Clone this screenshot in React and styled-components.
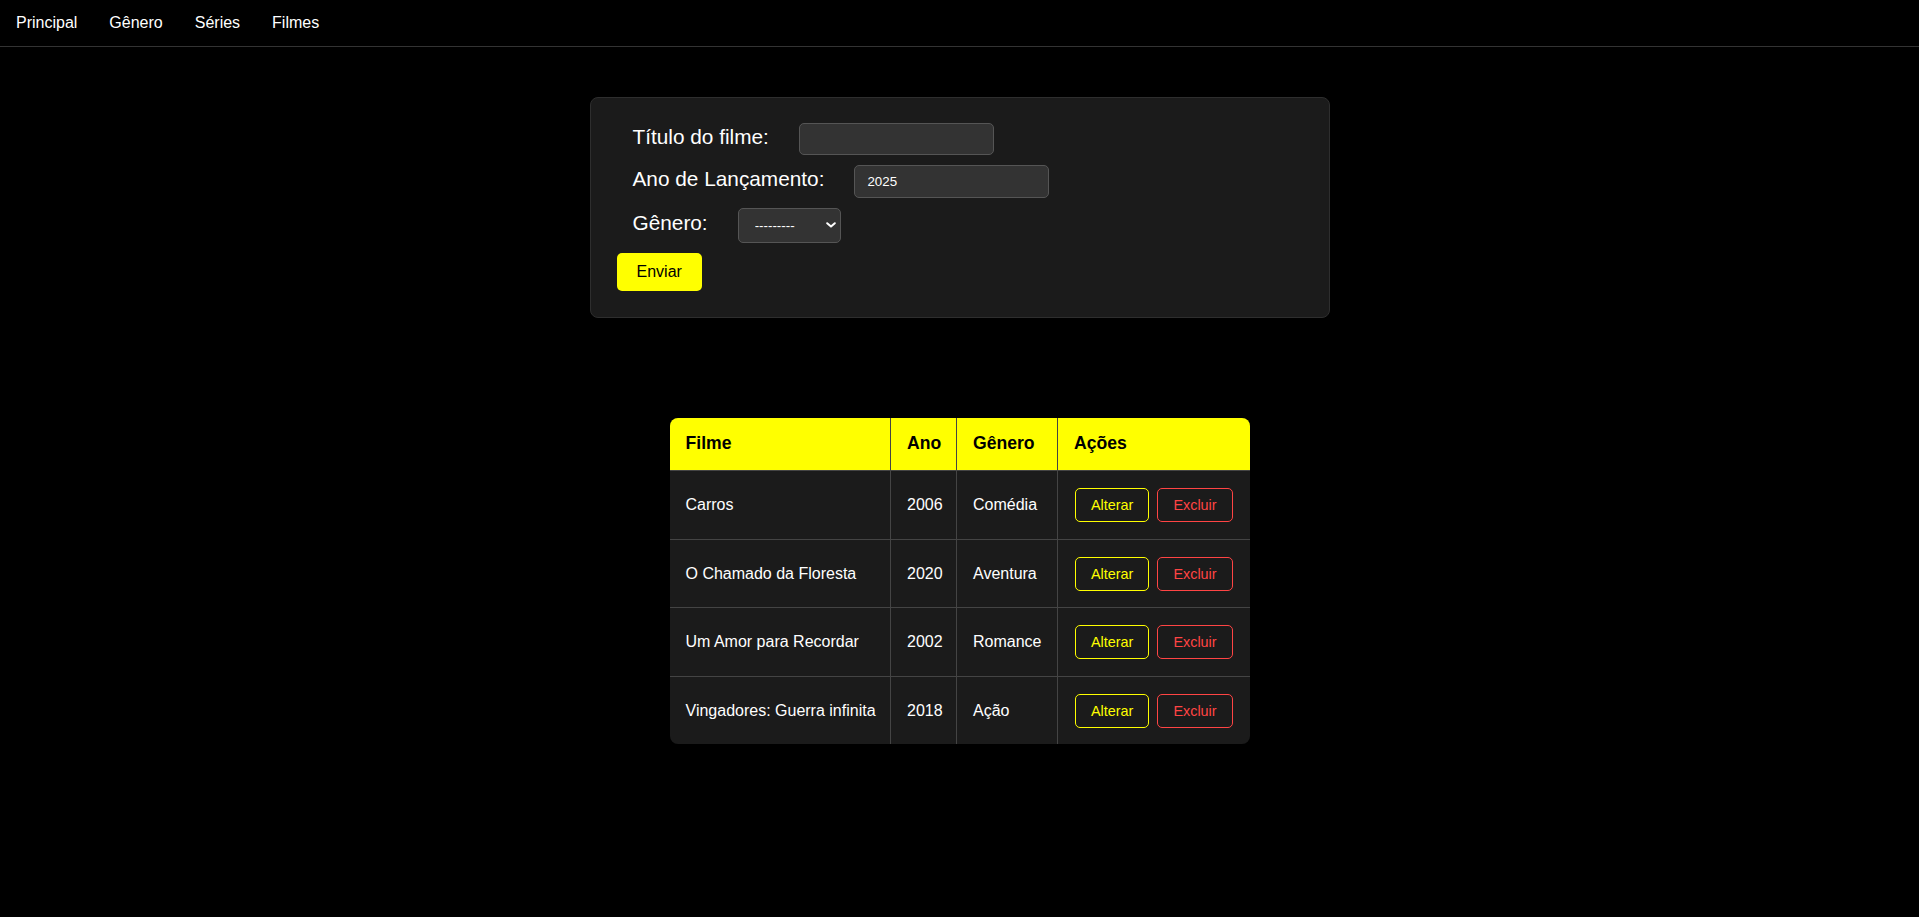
import styled, { createGlobalStyle } from "styled-components";

const GlobalStyle = createGlobalStyle`
  * {
    box-sizing: border-box;
  }
  body {
    margin: 0;
    background-color: #000;
    color: #fff;
    font-family: "Liberation Sans", Arial, sans-serif;
  }
`;

const filmes = [
  { id: 1, titulo: "Carros", ano: 2006, genero: "Comédia" },
  { id: 2, titulo: "O Chamado da Floresta", ano: 2020, genero: "Aventura" },
  { id: 3, titulo: "Um Amor para Recordar", ano: 2002, genero: "Romance" },
  { id: 4, titulo: "Vingadores: Guerra infinita", ano: 2018, genero: "Ação" },
];

const App = () => {
  return (
    <>
      <GlobalStyle />
      <Navbar>
        <NavLink href="#">Principal</NavLink>
        <NavLink href="#">Gênero</NavLink>
        <NavLink href="#">Séries</NavLink>
        <NavLink href="#">Filmes</NavLink>
      </Navbar>

      <FormCard onSubmit={(e) => e.preventDefault()}>
        <FormRow>
          <Label htmlFor="titulo">Título do filme:</Label>
          <TextInput id="titulo" type="text" $height={32} />
        </FormRow>
        <FormRow>
          <Label htmlFor="ano">Ano de Lançamento:</Label>
          <TextInput id="ano" type="number" defaultValue="2025" $height={33} />
        </FormRow>
        <FormRow>
          <Label htmlFor="genero">Gênero:</Label>
          <SelectWrap>
            <Select id="genero" defaultValue="">
              <option value="">---------</option>
              <option value="1">Comédia</option>
              <option value="2">Aventura</option>
              <option value="3">Romance</option>
              <option value="4">Ação</option>
            </Select>
            <Chevron viewBox="0 0 10 6" aria-hidden="true">
              <path d="M1.2 1.2 L5 4.6 L8.8 1.2" />
            </Chevron>
          </SelectWrap>
        </FormRow>
        <SubmitButton type="submit">Enviar</SubmitButton>
      </FormCard>

      <TableWrap>
        <Table>
          <colgroup>
            <col style={{ width: 221 }} />
            <col style={{ width: 66 }} />
            <col style={{ width: 101 }} />
            <col style={{ width: 192 }} />
          </colgroup>
          <thead>
            <tr>
              <th>Filme</th>
              <th>Ano</th>
              <th>Gênero</th>
              <th>Ações</th>
            </tr>
          </thead>
          <tbody>
            {filmes.map((filme) => (
              <tr key={filme.id}>
                <td>{filme.titulo}</td>
                <td>{filme.ano}</td>
                <td>{filme.genero}</td>
                <td>
                  <Actions>
                    <ActionButton $color="#ffff00">Alterar</ActionButton>
                    <ActionButton $color="#ff4444">Excluir</ActionButton>
                  </Actions>
                </td>
              </tr>
            ))}
          </tbody>
        </Table>
      </TableWrap>
    </>
  );
};

const Navbar = styled.nav`
  display: flex;
  align-items: center;
  height: 47px;
  border-bottom: 1px solid #333;
  background-color: #000;
`;

const NavLink = styled.a`
  padding: 0 16px;
  color: #fff;
  font-size: 16px;
  text-decoration: none;
  line-height: 44px;
`;

const FormCard = styled.form`
  width: 740px;
  margin: 50px auto 0;
  padding: 25px 26px 26px;
  background-color: #1b1b1b;
  border: 1px solid #2e2e2e;
  border-radius: 8px;
  display: flex;
  flex-direction: column;
  align-items: flex-start;
  gap: 10px;
`;

const FormRow = styled.div`
  display: flex;
  align-items: baseline;
  gap: 30px;
  padding-left: 16px;
`;

const Label = styled.label`
  font-size: 20.8px;
  color: #fff;
`;

const TextInput = styled.input`
  width: 195px;
  height: ${({ $height }) => $height}px;
  padding: 0 12px;
  background-color: #333;
  border: 1px solid #555;
  border-radius: 5px;
  color: #fff;
  font-family: "Liberation Sans", Arial, sans-serif;
  font-size: 13.33px;
  outline: none;
  -moz-appearance: textfield;

  &::-webkit-outer-spin-button,
  &::-webkit-inner-spin-button {
    -webkit-appearance: none;
    margin: 0;
  }
`;

const SelectWrap = styled.div`
  position: relative;
  display: inline-block;
`;

const Select = styled.select`
  appearance: none;
  width: 103px;
  height: 35px;
  padding: 0 24px 0 16px;
  background-color: #333;
  border: 1px solid #555;
  border-radius: 5px;
  color: #fff;
  font-family: "Liberation Sans", Arial, sans-serif;
  font-size: 13.33px;
  outline: none;
`;

const Chevron = styled.svg`
  position: absolute;
  right: 5px;
  top: 14px;
  width: 10px;
  height: 6px;
  fill: none;
  stroke: #fff;
  stroke-width: 2;
  stroke-linecap: round;
  stroke-linejoin: round;
  pointer-events: none;
`;

const SubmitButton = styled.button`
  padding: 10px 20px;
  background-color: #ffff00;
  color: #000;
  border: none;
  border-radius: 5px;
  font-family: "Liberation Sans", Arial, sans-serif;
  font-size: 16px;
  cursor: pointer;
`;

const TableWrap = styled.div`
  width: 580px;
  margin: 100px auto 0;
  border-radius: 8px;
  overflow: hidden;
  background-color: #1b1b1b;
`;

const Table = styled.table`
  width: 100%;
  table-layout: fixed;
  border-collapse: collapse;
  font-size: 16px;

  th {
    background-color: #ffff00;
    color: #000;
    font-size: 17.6px;
    font-weight: bold;
    text-align: left;
    padding: 15px 16px 16px;
  }

  td {
    color: #fff;
    padding: 17px 16px 16.5px;
    vertical-align: middle;
    white-space: nowrap;
  }

  th + th,
  td + td {
    border-left: 1px solid #444;
  }

  tbody tr {
    border-top: 1px solid #444;
  }
`;

const Actions = styled.div`
  display: flex;
  gap: 8px;
  padding-left: 1px;
`;

const ActionButton = styled.button`
  padding: 8px 15px;
  background-color: transparent;
  color: ${({ $color }) => $color};
  border: 1px solid ${({ $color }) => $color};
  border-radius: 5px;
  font-family: "Liberation Sans", Arial, sans-serif;
  font-size: 14.4px;
  cursor: pointer;
`;

export default App;
